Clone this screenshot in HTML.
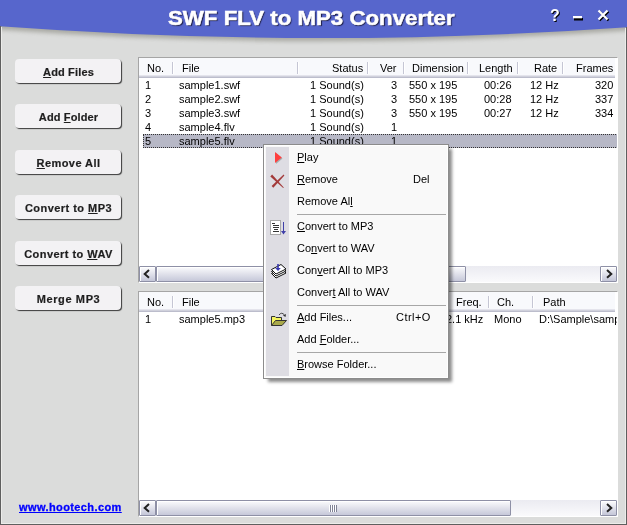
<!DOCTYPE html>
<html><head><meta charset="utf-8">
<style>
*{margin:0;padding:0;box-sizing:border-box}
html,body{width:627px;height:525px;overflow:hidden}
.t,.btn>span,.mi{will-change:transform}
body{position:relative;background:#dbdcdb;font-family:"Liberation Sans",sans-serif;font-size:11px;color:#000}
.abs{position:absolute}
.t{position:absolute;white-space:nowrap;line-height:13px}
.btn{position:absolute;left:15px;width:106px;height:24px;border-radius:4px;background:#f3f2f4;
 box-shadow:1px 1px 1px #3a3a3a;font-weight:bold;color:#1e1e1e;text-align:center}
.btn>span{position:absolute;left:1px;right:0;top:7px;line-height:13px;-webkit-text-stroke:0.2px #1e1e1e}
.u{text-decoration:underline}
.list{position:absolute;left:138px;width:480px;height:226px;background:#fff;border-top:1px solid #a5a5a5;border-left:1px solid #a5a5a5;border-right:1px solid #fff;border-bottom:1px solid #fff;overflow:hidden}
.hdr{position:absolute;left:0;top:0;width:476px;height:20px;background:linear-gradient(#f8f9fc 0,#f8f9fc 17px,#e4e4ec 17px,#e4e4ec 18px,#d0d1dc 18px,#d0d1dc 19px,#bcbdcc 19px)}
.sep{position:absolute;top:4px;width:1px;height:12px;background:#c5c6d4;box-shadow:1px 0 0 #fff}
.sb{position:absolute;left:0;width:478px;height:16px;background:linear-gradient(#ebebf1,#fafafc)}
.arr{position:absolute;top:0;width:17px;height:16px;border:1px solid #8e90a6;border-radius:1px;box-shadow:inset 1px 1px 0 #fff;background:linear-gradient(#fdfdfe,#c4c6d8)}
.arr svg{position:absolute;left:0;top:0}
.menu{position:absolute;left:263px;top:144px;width:186px;height:235px;background:#f9f9f9;border:1px solid #8c8c8c;box-shadow:4px 4px 3px -1px rgba(0,0,0,0.45),inset 0 0 0 1px #fff}
.icol{position:absolute;left:2px;top:2px;width:23px;height:229px;background:#dedde3}
.mi{position:absolute;left:33px;white-space:nowrap;line-height:13px}
.msep{position:absolute;left:33px;width:149px;height:1px;background:#a7a7a7}
</style></head><body>

<!-- title bar -->
<svg class="abs" style="left:0;top:0" width="627" height="60" viewBox="0 0 627 60">
 <defs>
  <filter id="bl" x="-10%" y="-50%" width="120%" height="200%"><feGaussianBlur stdDeviation="2"/></filter>
 </defs>
 <path d="M-10,0 H637 V30 Q313.5,53 -10,29 Z" fill="#85857c" opacity="0.58" filter="url(#bl)"/>
 <path d="M0,0 H627 V27.2 Q313.5,49.4 0,26.3 Z" fill="#5766cc"/>
</svg>
<div class="t" style="left:168px;top:7px;font-size:19.5px;line-height:22px;font-weight:bold;color:#fff;text-shadow:1px 1px 1px #1a1a40;-webkit-text-stroke:0.5px #fff;transform-origin:0 0;transform:scaleX(1.142)">SWF FLV to MP3 Converter</div>
<div class="t" style="left:550px;top:7px;font-size:16px;line-height:18px;font-weight:bold;color:#fff;text-shadow:1px 1px 0 #000">?</div>
<svg class="abs" style="left:0;top:0" width="627" height="30" viewBox="0 0 627 30">
 <rect x="574" y="18" width="9" height="2.5" fill="#000"/>
 <rect x="573" y="16" width="9" height="2.3" fill="#fff"/>
 <path d="M599.5,11.5 L608.5,20.5 M608.5,11.5 L599.5,20.5" stroke="#000" stroke-width="2.2"/>
 <path d="M598.5,10.5 L607.5,19.5 M607.5,10.5 L598.5,19.5" stroke="#fff" stroke-width="2.2"/>
</svg>

<!-- window borders -->
<div class="abs" style="left:1px;top:27px;width:1px;height:497px;background:#ececea"></div>
<div class="abs" style="left:625px;top:28px;width:1px;height:496px;background:#ececea"></div>
<div class="abs" style="left:1px;top:523px;width:625px;height:1px;background:#ececea"></div>
<div class="abs" style="left:0;top:26px;width:1px;height:499px;background:#5f5f5f"></div>
<div class="abs" style="left:626px;top:27px;width:1px;height:498px;background:#5f5f5f"></div>
<div class="abs" style="left:0;top:524px;width:627px;height:1px;background:#5f5f5f"></div>

<!-- buttons -->
<div class="btn" style="top:59px;letter-spacing:0.15px"><span><span class="u">A</span>dd Files</span></div>
<div class="btn" style="top:104px;letter-spacing:0.12px"><span>Add <span class="u">F</span>older</span></div>
<div class="btn" style="top:150px;letter-spacing:0.44px"><span><span class="u">R</span>emove All</span></div>
<div class="btn" style="top:195px;letter-spacing:0.46px"><span>Convert to <span class="u">M</span>P3</span></div>
<div class="btn" style="top:241px;letter-spacing:0.45px"><span>Convert to <span class="u">W</span>AV</span></div>
<div class="btn" style="top:286px;letter-spacing:0.62px"><span>Merge MP3</span></div>

<!-- list 1 -->
<div class="list" style="top:57px">
 <div class="hdr">
  <div class="sep" style="left:33px"></div>
  <div class="sep" style="left:158px"></div>
  <div class="sep" style="left:228px"></div>
  <div class="sep" style="left:264px"></div>
  <div class="sep" style="left:328px"></div>
  <div class="sep" style="left:378px"></div>
  <div class="sep" style="left:423px"></div>
  <div class="t" style="left:8px;top:4px">No.</div>
  <div class="t" style="left:43px;top:4px">File</div>
  <div class="t" style="right:252px;top:4px">Status</div>
  <div class="t" style="right:218px;top:4px">Ver</div>
  <div class="t" style="left:273px;top:4px">Dimension</div>
  <div class="t" style="right:102px;top:4px">Length</div>
  <div class="t" style="right:58px;top:4px">Rate</div>
  <div class="t" style="right:2px;top:4px">Frames</div>
 </div>
 <div class="abs" style="left:4px;top:76px;width:475px;height:14px;background:#b7b8c6;outline:1px dotted #333;outline-offset:-1px"></div>
 <div class="t" style="left:6px;top:21px">1</div><div class="t" style="left:40px;top:21px">sample1.swf</div><div class="t" style="right:253px;top:21px">1 Sound(s)</div><div class="t" style="right:220px;top:21px">3</div><div class="t" style="left:270px;top:21px">550 x 195</div><div class="t" style="right:105px;top:21px">00:26</div><div class="t" style="right:58px;top:21px">12 Hz</div><div class="t" style="right:4px;top:21px">320</div>
 <div class="t" style="left:6px;top:35px">2</div><div class="t" style="left:40px;top:35px">sample2.swf</div><div class="t" style="right:253px;top:35px">1 Sound(s)</div><div class="t" style="right:220px;top:35px">3</div><div class="t" style="left:270px;top:35px">550 x 195</div><div class="t" style="right:105px;top:35px">00:28</div><div class="t" style="right:58px;top:35px">12 Hz</div><div class="t" style="right:4px;top:35px">337</div>
 <div class="t" style="left:6px;top:49px">3</div><div class="t" style="left:40px;top:49px">sample3.swf</div><div class="t" style="right:253px;top:49px">1 Sound(s)</div><div class="t" style="right:220px;top:49px">3</div><div class="t" style="left:270px;top:49px">550 x 195</div><div class="t" style="right:105px;top:49px">00:27</div><div class="t" style="right:58px;top:49px">12 Hz</div><div class="t" style="right:4px;top:49px">334</div>
 <div class="t" style="left:6px;top:63px">4</div><div class="t" style="left:40px;top:63px">sample4.flv</div><div class="t" style="right:253px;top:63px">1 Sound(s)</div><div class="t" style="right:220px;top:63px">1</div>
 <div class="t" style="left:6px;top:77px">5</div><div class="t" style="left:40px;top:77px">sample5.flv</div><div class="t" style="right:253px;top:77px">1 Sound(s)</div><div class="t" style="right:220px;top:77px">1</div>
 <div class="sb" style="top:208px">
  <div class="arr" style="left:0"><svg width="15" height="14"><path d="M9,3 L4.7,6.9 L9,10.8" fill="none" stroke="#222" stroke-width="2"/></svg></div>
  <div class="abs" style="left:17px;top:0;width:310px;height:16px;border:1px solid #8e90a6;border-radius:1px;box-shadow:inset 1px 1px 0 #fff;background:linear-gradient(#fbfbfd,#c6c8d9)"></div>
  <div class="arr" style="left:461px"><svg width="15" height="14"><path d="M6,3 L10.3,6.9 L6,10.8" fill="none" stroke="#222" stroke-width="2"/></svg></div>
 </div>
</div>

<!-- list 2 -->
<div class="list" style="top:291px">
 <div class="hdr">
  <div class="sep" style="left:33px"></div>
  <div class="sep" style="left:349px"></div>
  <div class="sep" style="left:393px"></div>
  <div class="t" style="left:8px;top:4px">No.</div>
  <div class="t" style="left:43px;top:4px">File</div>
  <div class="t" style="left:317px;top:4px">Freq.</div>
  <div class="t" style="left:358px;top:4px">Ch.</div>
  <div class="t" style="left:404px;top:4px">Path</div>
 </div>
 <div class="t" style="left:6px;top:21px">1</div><div class="t" style="left:40px;top:21px">sample5.mp3</div>
 <div class="t" style="right:134px;top:21px">2.1 kHz</div><div class="t" style="left:355px;top:21px">Mono</div><div class="t" style="left:400px;top:21px">D:\Sample\sample5.mp3</div>
 <div class="sb" style="top:208px">
  <div class="arr" style="left:0"><svg width="15" height="14"><path d="M9,3 L4.7,6.9 L9,10.8" fill="none" stroke="#222" stroke-width="2"/></svg></div>
  <div class="abs" style="left:17px;top:0;width:355px;height:16px;border:1px solid #8e90a6;border-radius:1px;box-shadow:inset 1px 1px 0 #fff;background:linear-gradient(#fbfbfd,#c6c8d9)"><div class="abs" style="left:172px;top:4px;width:8px;height:7px;background:repeating-linear-gradient(90deg,#fff 0,#fff 1px,#7f8296 1px,#7f8296 2px)"></div></div>
  <div class="arr" style="left:461px"><svg width="15" height="14"><path d="M6,3 L10.3,6.9 L6,10.8" fill="none" stroke="#222" stroke-width="2"/></svg></div>
 </div>
</div>

<!-- link -->
<div class="t" style="left:19px;top:501px;font-weight:bold;color:#0000ff;text-decoration:underline;letter-spacing:0.4px;-webkit-text-stroke:0.3px #00f">www.hootech.com</div>

<!-- context menu -->
<div class="menu">
 <div class="icol"></div>
 <div class="mi" style="top:6px"><span class="u">P</span>lay</div>
 <div class="mi" style="top:28px"><span class="u">R</span>emove</div>
 <div class="mi" style="left:auto;right:18px;top:28px">Del</div>
 <div class="mi" style="top:50px">Remove Al<span class="u">l</span></div>
 <div class="msep" style="top:69px"></div>
 <div class="mi" style="top:75px"><span class="u">C</span>onvert to MP3</div>
 <div class="mi" style="top:97px">Co<span class="u">n</span>vert to WAV</div>
 <div class="mi" style="top:119px">Con<span class="u">v</span>ert All to MP3</div>
 <div class="mi" style="top:141px">Conver<span class="u">t</span> All to WAV</div>
 <div class="msep" style="top:160px"></div>
 <div class="mi" style="top:166px"><span class="u">A</span>dd Files...</div>
 <div class="mi" style="left:auto;right:17.5px;top:166px;letter-spacing:0.45px">Ctrl+O</div>
 <div class="mi" style="top:188px">Add <span class="u">F</span>older...</div>
 <div class="msep" style="top:207px"></div>
 <div class="mi" style="top:213px"><span class="u">B</span>rowse Folder...</div>
</div>

<!-- menu icons -->
<svg class="abs" style="left:0;top:0" width="627" height="525" viewBox="0 0 627 525" shape-rendering="crispEdges">
 <g shape-rendering="geometricPrecision">
  <polygon points="276,153 282.5,158.5 276,164" fill="#a7adae"/>
  <polygon points="275,152 281.8,157.5 275,163" fill="#ff3f3f"/>
  <polygon points="272.1,174.6 283.8,187.5 283.2,188.1 270.3,176.4" fill="#a33a3a"/>
  <polygon points="284.4,175.4 273.3,187.7 271.6,186 283.6,174.6" fill="#a33a3a"/>
 </g>
 <rect x="270.5" y="220.5" width="10" height="14" fill="#fff" stroke="#a9a9a9" stroke-width="1"/>
 <rect x="272" y="223" width="3" height="1" fill="#333"/>
 <rect x="273" y="225" width="6" height="1" fill="#333"/>
 <rect x="273" y="227" width="6" height="1" fill="#333"/>
 <rect x="274" y="229" width="4" height="1" fill="#333"/>
 <rect x="273" y="231" width="6" height="1" fill="#333"/>
 <rect x="283" y="222" width="1" height="12" fill="#4040a8"/>
 <g shape-rendering="geometricPrecision">
  <polygon points="281,231 286,231 283.5,234.5" fill="#4040a8"/>
 </g>
 <g shape-rendering="geometricPrecision" fill="#fff" stroke="#111" stroke-width="1">
  <polygon points="271.5,273.5 276,278 286,273 281.5,268.5"/>
  <polygon points="271.5,271.5 276,276 286,271 281.5,266.5"/>
  <polygon points="271.5,269.5 276,274 286,269 281,264.5"/>
 </g>
 <g shape-rendering="geometricPrecision">
  <rect x="277.2" y="264" width="1.6" height="5" fill="#3838b0"/>
  <polygon points="275.2,268 280.8,268 278,271" fill="#3838b0"/>
 </g>
 <g shape-rendering="geometricPrecision">
  <path d="M271.5,325.5 V316.5 H275 L276,317.5 H281.5 V320.5" fill="#f4f460" stroke="#333" stroke-width="1"/>
  <path d="M271.5,325.5 L275.5,320.5 H286.5 L282,325.5 Z" fill="#a9a94a" stroke="#333" stroke-width="1"/>
  <path d="M279,315 Q281.5,311.5 284.5,315" fill="none" stroke="#333" stroke-width="0.9"/>
  <polygon points="283,315.5 286,314 285.5,317" fill="#333"/>
 </g>
</svg>

</body></html>
